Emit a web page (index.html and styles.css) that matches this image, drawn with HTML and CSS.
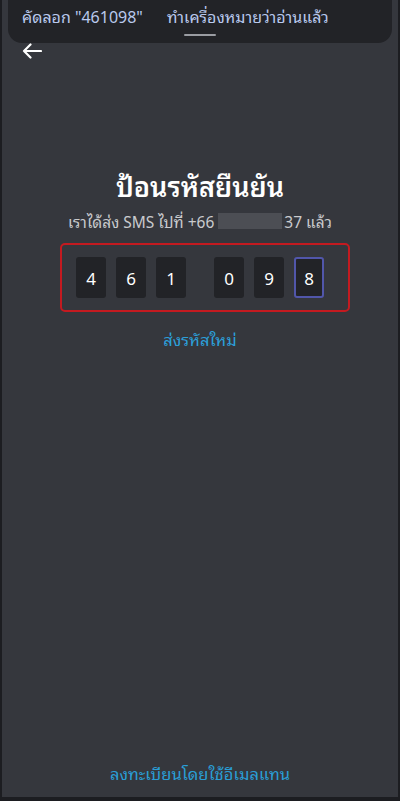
FILE: index.html
```html
<!DOCTYPE html>
<html lang="th">
<head>
<meta charset="utf-8">
<link rel="stylesheet" href="styles.css">
</head>
<body>
<div class="frame">
  <div class="screen">
    <div class="notif">
      <div class="notif-actions">
        <span class="act act-copy">คัดลอก "461098"</span>
        <span class="act act-read">ทำเครื่องหมายว่าอ่านแล้ว</span>
      </div>
      <div class="handle"></div>
    </div>
    <div class="topbar">
      <svg class="back" width="20" height="16" viewBox="0 0 20 16"><path d="M19 8H2M8.5 1.5L2 8l6.5 6.5" fill="none" stroke="#fff" stroke-width="2.2" stroke-linecap="round" stroke-linejoin="round"/></svg>
    </div>
    <div class="content">
      <h1 class="title">ป้อนรหัสยืนยัน</h1>
      <p class="sub">เราได้ส่ง SMS ไปที่ +66<span class="blur"></span>37 แล้ว</p>
      <div class="otp-outline">
        <div class="otp">
          <div class="group">
            <div class="digit">4</div>
            <div class="digit">6</div>
            <div class="digit">1</div>
          </div>
          <div class="group">
            <div class="digit">0</div>
            <div class="digit">9</div>
            <div class="digit active">8</div>
          </div>
        </div>
      </div>
      <a class="resend">ส่งรหัสใหม่</a>
    </div>
    <div class="bottom">
      <a class="email">ลงทะเบียนโดยใช้อีเมลแทน</a>
    </div>
  </div>
</div>
</body>
</html>
```
FILE: styles.css
```css
* { box-sizing: border-box; }
html, body { margin: 0; padding: 0; }
body {
  width: 400px;
  height: 801px;
  background: #1b1c20;
  font-family: "Noto Sans Thai Looped", "Noto Sans", "Noto Sans Thai", "DejaVu Sans", sans-serif;
  overflow: hidden;
}
.frame {
  width: 400px;
  height: 801px;
  padding: 0 2px 4px 2px;
  background: #1c1d21;
}
.screen {
  height: 797px;
  background: #35373d;
  display: flex;
  flex-direction: column;
}
.notif {
  margin: 0 6px;
  height: 43px;
  background: #222327;
  border-radius: 0 0 14px 14px;
  display: flex;
  flex-direction: column;
  align-items: center;
}
.notif-actions {
  width: 100%;
  display: flex;
  padding: 4px 0 0 14px;
  font-size: 16px;
  line-height: 24px;
  color: #b9c9ee;
}
.act-copy { width: 145px; }
.handle {
  margin-top: 6px;
  width: 32px;
  height: 2px;
  border-radius: 1px;
  background: #9a9ca2;
}
.topbar {
  height: 30px;
  padding: 0 0 0 20px;
  display: flex;
  align-items: flex-start;
}
.content {
  display: flex;
  flex-direction: column;
  align-items: center;
  padding-top: 94px;
}
.title {
  margin: 0;
  font-size: 27px;
  line-height: 36px;
  font-weight: 600;
  color: #ffffff;
}
.sub {
  margin: 7px 0 0 0;
  font-size: 15.5px;
  line-height: 22px;
  color: #c9cacd;
  display: flex;
  align-items: center;
}
.blur {
  display: inline-block;
  width: 64px;
  height: 16px;
  margin: 0 2px 0 4px;
  background: #4c4e54;
}
.otp-outline {
  margin-top: 11px;
  margin-left: 10px;
  width: 290px;
  height: 69px;
  border: 2px solid #c41a20;
  border-radius: 5px;
  display: flex;
  align-items: center;
  padding-left: 14px;
}
.otp {
  display: flex;
  gap: 28px;
}
.group {
  display: flex;
  gap: 10px;
}
.digit {
  width: 30px;
  height: 41px;
  background: #222327;
  border-radius: 3px;
  color: #ffffff;
  font-size: 17px;
  display: flex;
  align-items: center;
  justify-content: center;
}
.digit.active {
  border: 2px solid #5156aa;
}
.resend {
  margin-top: 16px;
  font-size: 16.5px;
  line-height: 22px;
  color: #2c9fd9;
}
.bottom {
  margin-top: auto;
  padding-bottom: 13px;
  display: flex;
  justify-content: center;
}
.email {
  font-size: 16.5px;
  line-height: 22px;
  color: #2a9ed6;
}
```
